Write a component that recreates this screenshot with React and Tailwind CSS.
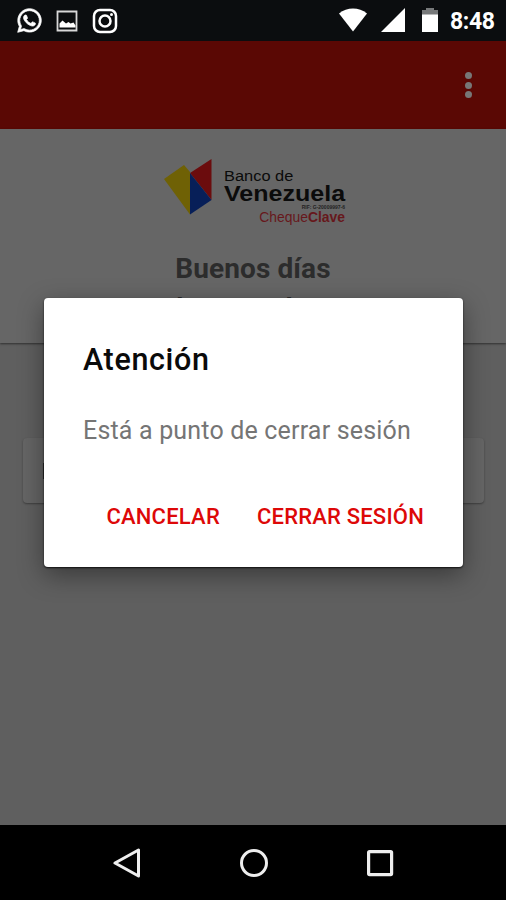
import { useState } from "react";
import { FaWhatsapp } from "react-icons/fa";

function BankLogo() {
  return (
    <div className="flex h-[68px] w-[184px] items-start pl-[3px]">
      <svg viewBox="0 0 48 56" className="h-[56px] w-[48px] shrink-0">
        <path d="M0 20 L20 6 L26 13 V55.500 Z" fill="#6f6105" />
        <path d="M26 14 L47.500 0 V41 L26 14Z" fill="#6b0c0d" />
        <path d="M26 14 L47.500 41 L26 55.500Z" fill="#071f58" />
      </svg>
      <div className="flex flex-1 flex-col pl-3 font-['Liberation_Sans',Arial,sans-serif]">
        <span className="mt-[9px] h-[15px] origin-left scale-x-[1.08] whitespace-nowrap text-[15.200px] leading-[16px] text-[#0b0b0b]">Banco de</span>
        <span className="h-[21px] origin-left scale-x-[1.160] whitespace-nowrap text-[21.600px] font-bold leading-[21px] text-[#0b0b0b]">Venezuela</span>
        <span className="h-[6px] self-end whitespace-nowrap text-[5px] font-bold leading-[7px] text-[#222]">RIF: G-20009997-6</span>
        <span className="self-end whitespace-nowrap text-[13.900px] leading-[15px] text-[#66181c]">
          Cheque<b>Clave</b>
        </span>
      </div>
    </div>
  );
}

function StatusBar() {
  return (
    <div className="flex h-[41px] items-center bg-[#0b0d0f] pb-px pl-[17px] pr-3 text-white">
      <FaWhatsapp className="mt-px h-[27px] w-[25px] shrink-0 stroke-white stroke-[14px]" />
      <svg viewBox="0 0 22 22" className="ml-[14px] mt-[2px] h-[22px] w-[22px]" fill="none" stroke="#d8d8d8" strokeWidth="1.800">
        <path d="M1.500 1.500h19v19h-19z" />
        <path d="M3.500 17.500v-4l3-3 3.500 3 2.500-1.500 2 1.500 3-1 2 3v2z" fill="#fff" stroke="none" />
      </svg>
      <svg viewBox="0 0 26 26" className="ml-[14px] mt-px h-[26px] w-[26px]" fill="none" stroke="#fff" strokeWidth="2.500">
        <rect x="2" y="2" width="22" height="22" rx="6" />
        <circle cx="13" cy="13" r="5.500" />
        <circle cx="19.500" cy="6.500" r="1.500" fill="#fff" stroke="none" />
      </svg>
      <svg viewBox="0 0 28 24" className="ml-auto h-6 w-7" fill="#fff">
        <path d="M0 5.500C8-1.200 20-1.200 28 5.500L14 23.500z" />
      </svg>
      <svg viewBox="0 0 24 24" className="ml-[14px] h-6 w-6" fill="#fff">
        <path d="M24 0v24H0z" />
      </svg>
      <svg viewBox="0 0 16 24" className="ml-[17px] h-6 w-4">
        <path d="M0 2h4V0h8v2h4v5H0z" fill="#77797a" />
        <path d="M0 6.500h16V24H0z" fill="#fff" />
      </svg>
      <span className="ml-3 mt-[3px] w-[44px] whitespace-nowrap text-[23px] font-bold leading-none tracking-[-0.400px]">8:48</span>
    </div>
  );
}

function LogoutDialog({ onClose }) {
  return (
    <div className="absolute left-[44px] top-[298px] flex h-[269px] w-[419px] flex-col rounded-[4px] bg-white pl-[39px] pr-[38px] shadow-[0_1px_2px_rgba(0,0,0,0.8),0_8px_26px_rgba(0,0,0,0.4)]">
      <h2 className="mt-[42px] text-[30.500px] font-medium leading-[40px] tracking-[0.650px] text-[#0a0a0a]">Atención</h2>
      <p className="mt-[35px] whitespace-nowrap text-[25px] leading-[32px] tracking-[0.180px] text-[#757575]">Está a punto de cerrar sesión</p>
      <div className="mr-px mt-[55px] flex justify-end gap-[37px] whitespace-nowrap text-[22px] font-medium leading-[30px] tracking-[0.200px] text-[#dd0808]">
        <button onClick={onClose}>CANCELAR</button>
        <button onClick={onClose}>CERRAR SESIÓN</button>
      </div>
    </div>
  );
}

export default function App() {
  const [open, setOpen] = useState(true);

  return (
    <div className="relative flex h-[900px] w-[506px] flex-col overflow-hidden bg-[#5f5f5f] font-[Roboto,sans-serif]">
      <StatusBar />

      {/* App bar */}
      <header className="flex h-[88px] items-center justify-end bg-[#5a0804] pr-[34px]">
        <button onClick={() => setOpen(true)} className="flex flex-col gap-[2.500px]">
          <span className="h-[7px] w-[7px] rounded-full bg-[#777]"></span>
          <span className="h-[7px] w-[7px] rounded-full bg-[#777]"></span>
          <span className="h-[7px] w-[7px] rounded-full bg-[#777]"></span>
        </button>
      </header>

      {/* Greeting */}
      <section className="flex h-[214px] flex-col items-center bg-[#666] pt-[30px] shadow-[0_1px_2px_rgba(0,0,0,0.5)]">
        <BankLogo />
        <p className="mt-[25px] text-[28px] font-bold leading-[34px] tracking-[0.100px] text-[#2c2c2c]">Buenos días</p>
        <p className="mt-[6px] text-[27px] font-bold leading-[34px] text-[#2c2c2c]">19 de mayo de 2018</p>
      </section>

      <main className="flex-1 px-[22px] pl-[23px] pt-[95px]">
        <div className="flex h-[65px] items-center rounded-[4px] bg-[#656565] pl-[20px] shadow-[0_1px_2px_rgba(0,0,0,0.35)]">
          <span className="h-4 w-4 bg-[#2c2c2c]"></span>
        </div>
      </main>

      {/* Android navigation */}
      <nav className="flex h-[75px] items-center bg-black pl-[112px]">
        <svg viewBox="0 0 30 30" className="h-[30px] w-[30px]" fill="none" stroke="#eee" strokeWidth="3" strokeLinejoin="round">
          <path d="M3 15L26.500 2v26z" />
        </svg>
        <svg viewBox="0 0 30 30" className="ml-[97px] h-[30px] w-[30px]" fill="none" stroke="#eee" strokeWidth="3">
          <circle cx="15" cy="15" r="12.500" />
        </svg>
        <svg viewBox="0 0 30 30" className="ml-[96px] h-[30px] w-[30px]" fill="none" stroke="#eee" strokeWidth="3.200">
          <rect x="3.600" y="3.600" width="23" height="23" rx="1" />
        </svg>
      </nav>

      {open && <LogoutDialog onClose={() => setOpen(false)} />}
    </div>
  );
}
